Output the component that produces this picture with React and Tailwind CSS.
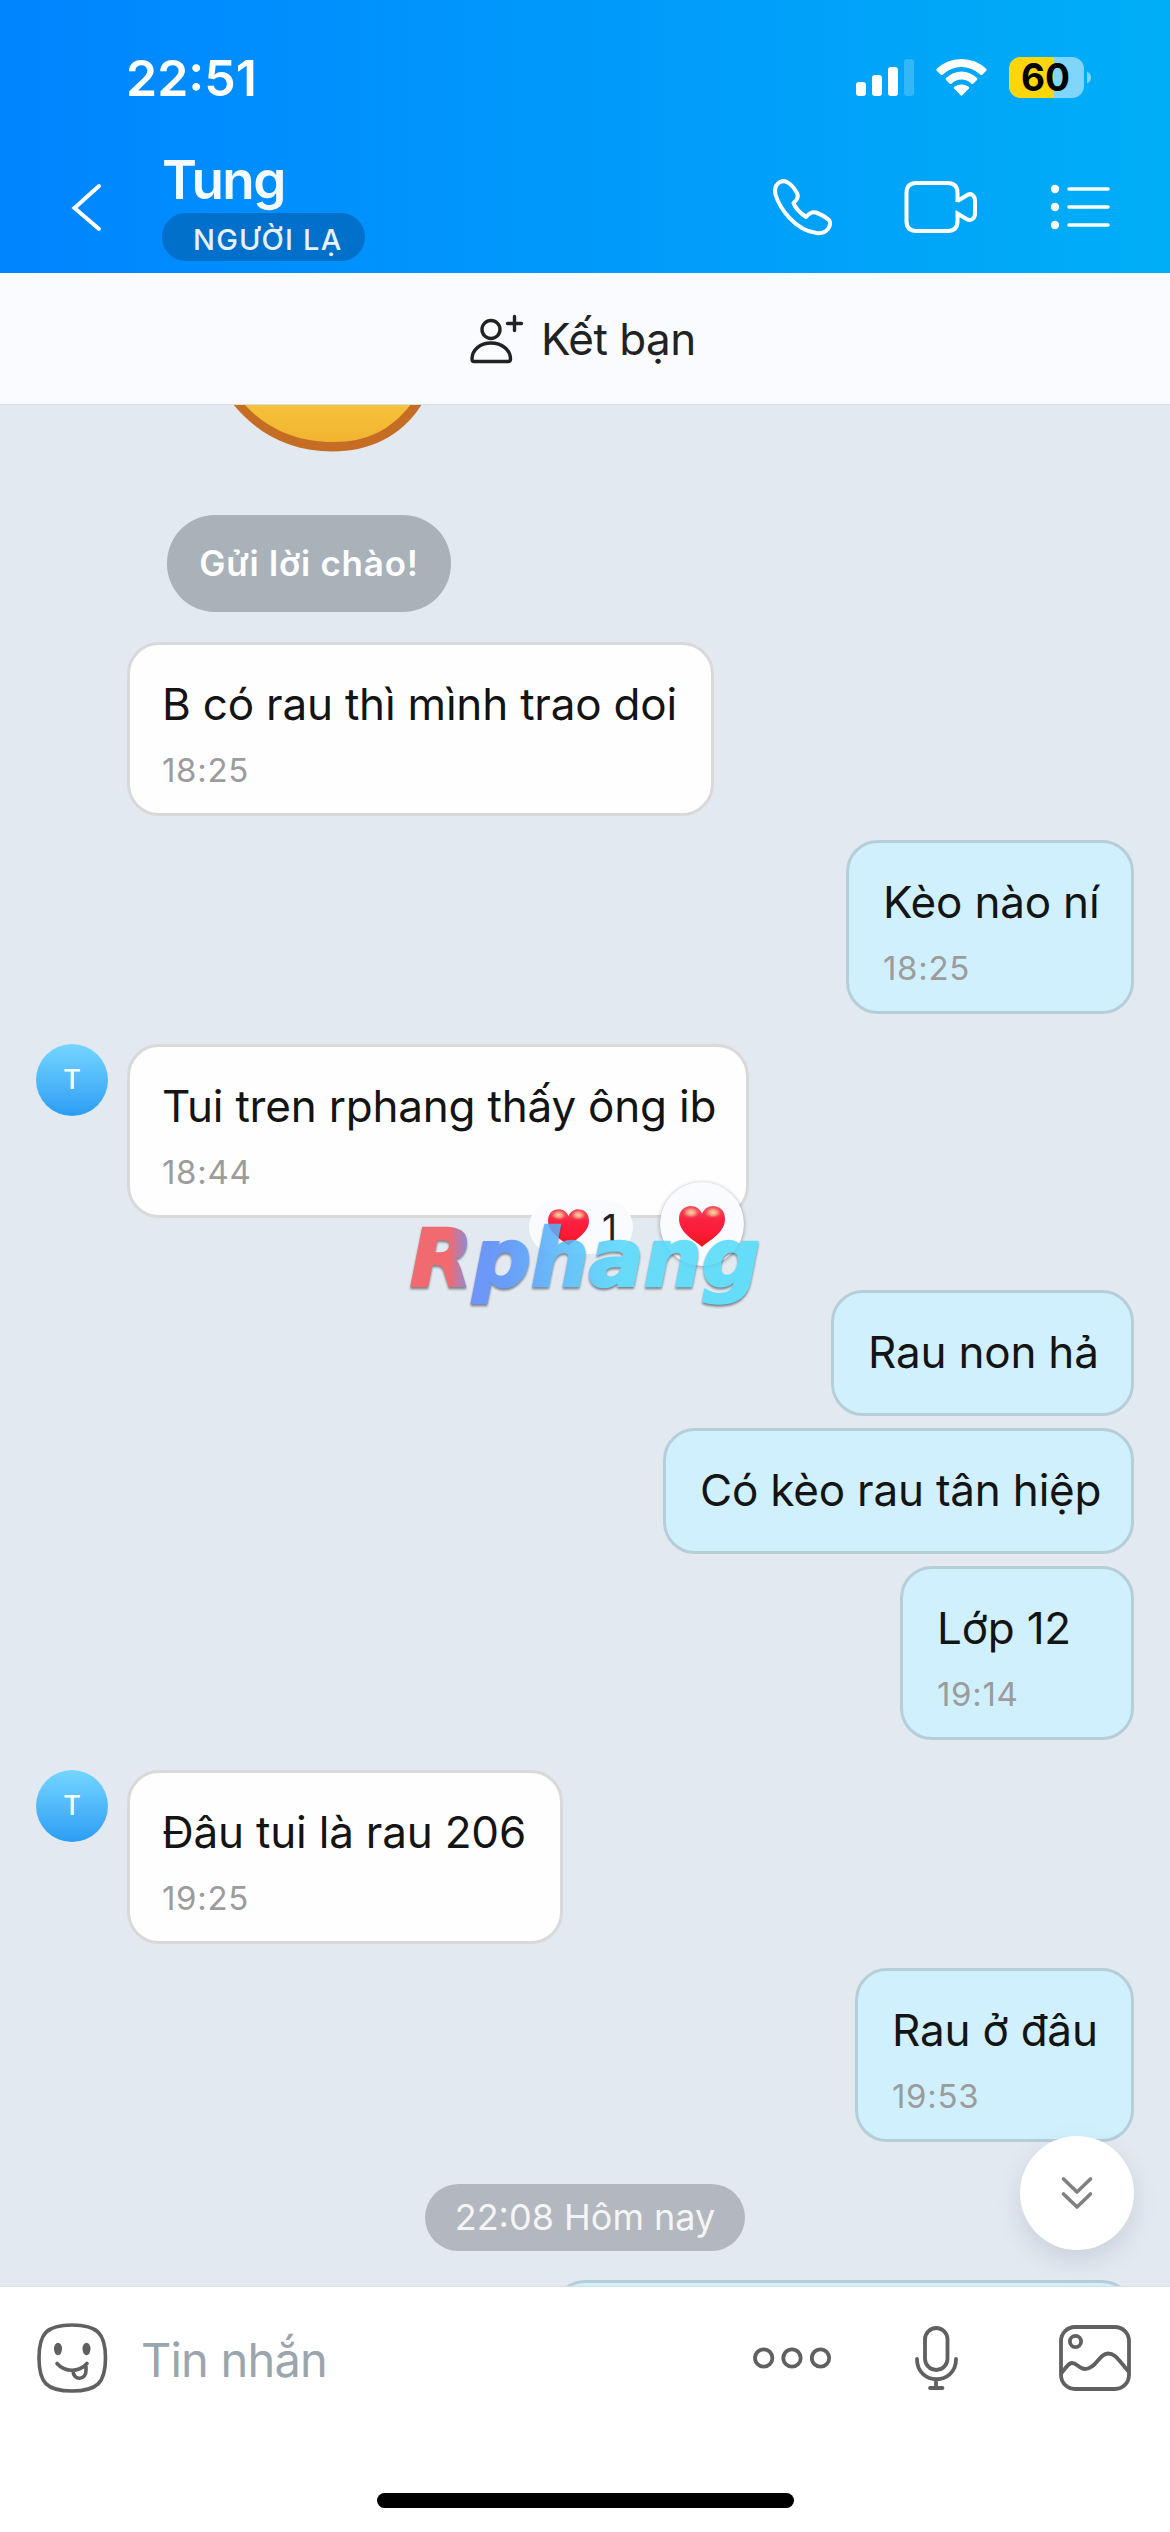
import clsx from "clsx";

const messages = [
  { id: 1, text: "B có rau thì mình trao doi", time: "18:25", box: "w-[587px] h-[174px] mt-[30px]" },
  { id: 2, mine: true, text: "Kèo nào ní", time: "18:25", box: "w-[288px] h-[174px] mt-6" },
  { id: 3, avatar: true, liked: true, text: "Tui tren rphang thấy ông ib", time: "18:44", box: "w-[622px] h-[174px] mt-[30px]" },
  { id: 4, mine: true, text: "Rau non hả", box: "w-[303px] h-[126px] mt-[72px]" },
  { id: 5, mine: true, text: "Có kèo rau tân hiệp", box: "w-[471px] h-[126px] mt-3" },
  { id: 6, mine: true, text: "Lớp 12", time: "19:14", box: "w-[234px] h-[174px] mt-3" },
  { id: 7, avatar: true, text: "Đâu tui là rau 206", time: "19:25", box: "w-[436px] h-[174px] mt-[30px]" },
  { id: 8, mine: true, text: "Rau ở đâu", time: "19:53", box: "w-[279px] h-[174px] mt-6" },
];

// ___________________________ICONS_________________________________________

function Heart({ className, id }) {
  return (
    <svg viewBox="0 0 46 41" className={className}>
      <defs>
        <linearGradient id={id} x1="0" y1="0" x2="0" y2="1">
          <stop offset="0" stopColor="#f2505a" />
          <stop offset="0.35" stopColor="#fb2140" />
          <stop offset="0.7" stopColor="#fb1a36" />
          <stop offset="1" stopColor="#e8140f" />
        </linearGradient>
        <radialGradient id={id + "s"}>
          <stop offset="0" stopColor="#ffd9a8" />
          <stop offset="0.5" stopColor="#ffb08c" stopOpacity="0.75" />
          <stop offset="1" stopColor="#ff5060" stopOpacity="0" />
        </radialGradient>
      </defs>
      <path
        d="M23 41C19 36 0 28 0 13C0 5 5 0 12 0C17 0 21 3 23 7.500C25 3 29 0 34 0C41 0 46 5 46 13C46 28 27 36 23 41Z"
        fill={`url(#${id})`}
      />
      <ellipse cx="12" cy="6.500" rx="9" ry="6" fill={`url(#${id}s)`} />
      <ellipse cx="34" cy="6.500" rx="9" ry="6" fill={`url(#${id}s)`} />
    </svg>
  );
}

function StatusIcons() {
  return (
    <svg className="w-[240px] h-[44px]" viewBox="852 56 240 44" fill="#fff">
      <rect x="856" y="82" width="10" height="14" rx="3" />
      <rect x="872" y="75" width="10" height="21" rx="3" />
      <rect x="888" y="67" width="10" height="29" rx="3" />
      <rect x="904" y="59" width="10" height="37" rx="3" opacity="0.2" />
      <path d="M961.500 96L954 88.500Q953.500 87.500 954.300 86.800Q961.500 82 968.700 86.800Q969.500 87.500 969 88.500Z" />
      <path d="M950 84L945.800 79.700Q945.200 78.800 946 78Q953 71.500 961.500 71.500Q970 71.500 977 78Q977.800 78.800 977.200 79.700L973 84Q972.300 84.300 971.500 83.700Q967 79.500 961.500 79.500Q956 79.500 951.500 83.700Q950.700 84.300 950 84Z" />
      <path d="M941 75L936.600 70.600Q936 69.800 936.600 69Q947 59 961.500 59Q976 59 986.400 69Q987 69.800 986.400 70.600L982 75Q981.200 75.300 980.500 74.700Q972 67 961.500 67Q951 67 942.500 74.700Q941.800 75.300 941 75Z" />
      <rect x="1009" y="57" width="75" height="41" rx="12" opacity="0.5" />
      <path d="M1021 57H1054V98H1021A12 12 0 0 1 1009 86V69A12 12 0 0 1 1021 57Z" fill="#ffd60a" />
      <path d="M1087 71.500Q1091 73.500 1091 77.500Q1091 81.500 1087 83.500Z" opacity="0.5" />
      <text x="1021" y="91" fill="#000" fontFamily="Inter, sans-serif" fontWeight="700" fontSize="38" textLength="49" lengthAdjust="spacingAndGlyphs">
        60
      </text>
    </svg>
  );
}

function PhoneIcon() {
  return (
    <svg className="w-[60px] h-[60px]" viewBox="772 177 60 60" fill="none" stroke="#fff" strokeWidth="4" strokeLinejoin="round">
      <path d="M787.500 182.500Q784 180 780 182Q773.500 186 775.500 194.500C779.500 208 795 230.500 816.500 233Q824 234 828 229Q832 223 828.500 219.500Q823 215 816 212.500Q811 211 806 217Q796 210 793.500 203Q799.500 198 797 193Q792 184.500 787.500 182.500Z" />
    </svg>
  );
}

function VideoIcon() {
  return (
    <svg className="w-[76px] h-[56px]" viewBox="903 179 76 56" fill="none" stroke="#fff" strokeWidth="4">
      <path d="M957.500 202V193Q957.500 183 947.500 183H916.500Q906.500 183 906.500 193V221Q906.500 231 916.500 231H947.500Q957.500 231 957.500 221V213.500L966.500 219Q970 221 972.500 219Q975 217 975 214V200.500Q975 197 972.500 195Q970 193 966.500 195.500L957.500 201" />
    </svg>
  );
}

function ListIcon() {
  return (
    <svg className="w-[64px] h-[50px]" viewBox="1049 182 64 50" fill="#fff" stroke="#fff" strokeLinecap="round">
      <circle cx="1055" cy="189" r="4.200" stroke="none" />
      <circle cx="1055" cy="207" r="4.200" stroke="none" />
      <circle cx="1055" cy="225" r="4.200" stroke="none" />
      <path d="M1069 189H1108M1069 207H1108M1069 225H1108" strokeWidth="3.600" />
    </svg>
  );
}

// ___________________________MESSAGES_________________________________________

function Avatar() {
  return (
    <div className="w-[72px] h-[72px] shrink-0 rounded-full bg-linear-to-b from-[#74d6ff] to-[#2a9df4] flex items-center justify-center text-white text-[27px] font-medium">
      T
    </div>
  );
}

function Bubble({ msg }) {
  return (
    <div className={clsx("flex", msg.mine ? "justify-end pr-9" : "pl-9")}>
      {!msg.mine && (
        <div className={clsx("w-[91px] shrink-0", msg.id === 1 ? "" : "pt-[30px]")}>
          {msg.avatar && <Avatar />}
        </div>
      )}
      <div
        className={clsx(
          "relative rounded-[32px] border-[3px] pt-[29px] whitespace-nowrap",
          msg.box,
          msg.mine ? "pl-[34px] bg-[#d0f0fe] border-[#b6ced8]" : "pl-8 bg-[#fefefe] border-[#d9d9d9]"
        )}
      >
        <p className="text-[44px] leading-[60px] tracking-[-0.2px] text-[#141414]">{msg.text}</p>
        {msg.time && <p className="mt-4 text-[33px] leading-10 tracking-[0.7px] text-[#9c9c9c]">{msg.time}</p>}
        {msg.liked && (
          <>
            <div className="absolute left-[399px] top-[153px] w-[104px] h-[54px] rounded-full bg-[#f9fbff] flex items-center pl-[19px] gap-[13px]">
              <Heart className="w-[41px] h-[37px]" id="h1" />
              <span className="text-[37px] leading-none text-[#222]">1</span>
            </div>
            <div className="absolute left-[530px] top-[135px] w-[84px] h-[84px] rounded-full bg-[#f9fbff] shadow-[0_1px_4px_rgba(0,0,0,0.35)] flex items-center justify-center">
              <Heart className="w-[46px] h-[41px] mt-1" id="h2" />
            </div>
            <Watermark />
          </>
        )}
      </div>
    </div>
  );
}

function Watermark() {
  return (
    <svg
      className="absolute left-[270px] top-[163px] w-[380px] h-[110px] opacity-85 drop-shadow-[0_2px_1px_rgba(50,60,70,0.7)]"
      viewBox="400 1210 380 110"
    >
      <defs>
        <linearGradient id="wm" gradientUnits="userSpaceOnUse" x1="411" y1="0" x2="760" y2="0">
          <stop offset="0" stopColor="#f4545a" />
          <stop offset="0.11" stopColor="#f4545a" />
          <stop offset="0.18" stopColor="#5a87fa" />
          <stop offset="0.27" stopColor="#5590fa" />
          <stop offset="0.45" stopColor="#53bdfb" />
          <stop offset="0.6" stopColor="#52d8fa" />
          <stop offset="1" stopColor="#50dcfa" />
        </linearGradient>
      </defs>
      <text
        x="410"
        y="1286"
        textLength="350"
        lengthAdjust="spacingAndGlyphs"
        fill="url(#wm)"
        stroke="url(#wm)"
        strokeWidth="2.500"
        fontFamily="DejaVu Sans, sans-serif"
        fontWeight="700"
        fontStyle="italic"
        fontSize="81"
      >
        Rphang
      </text>
    </svg>
  );
}

export default function App() {
  return (
    <div className="w-[1170px] h-[2532px] overflow-hidden flex flex-col bg-white font-['Inter','Noto_Sans',sans-serif]">
      {/* ___________________________HEADER_________________________________________ */}
      <header className="h-[273px] shrink-0 bg-linear-to-r from-[#0084ff] to-[#00aef6] text-white">
        <div className="h-[156px] pt-14 pl-[126px] pr-[78px] flex justify-between">
          <span className="text-[50px] leading-[44px] font-semibold">22:51</span>
          <StatusIcons />
        </div>
        <div className="h-[117px] flex">
          <svg className="ml-[70px] mt-6 w-[34px] h-[56px]" viewBox="70 180 34 56" fill="none" stroke="#fff" strokeWidth="4" strokeLinecap="round">
            <path d="M99 186L74.500 208L99 229" />
          </svg>
          <div className="ml-[58px] w-[300px]">
            <h1 className="h-[57px] text-[53px] leading-[48px] font-semibold text-[#f2f9ff] tracking-[-1.6px]">Tung</h1>
            <div className="w-[203px] h-12 rounded-full bg-[#0070cb] pl-[31px] text-[29px] leading-[53px] font-medium text-[#e6f1fa] tracking-[1.2px] whitespace-nowrap">
              NGƯỜI LẠ
            </div>
          </div>
          <div className="ml-auto mr-[57px] flex items-center h-[102px]">
            <PhoneIcon />
            <div className="ml-[71px]">
              <VideoIcon />
            </div>
            <div className="ml-[70px]">
              <ListIcon />
            </div>
          </div>
        </div>
      </header>

      <div className="h-[132px] shrink-0 bg-[#f9fbff] border-b border-[#dcdde0] flex items-center pl-[468px]">
        <svg className="w-[58px] h-[52px]" viewBox="468 311 58 52" fill="none" stroke="#222" strokeWidth="3.400" strokeLinecap="round" strokeLinejoin="round">
          <circle cx="491" cy="327.500" r="9" />
          <path d="M474 359.500Q472 359.500 472 357C472 348 480 341 491 341C502 341 510.500 348 510.500 357Q510.500 359.500 508 359.500Z" />
          <path d="M514.500 314.500V328.500M507.500 321.500H521.500" />
        </svg>
        <span className="ml-[15px] text-[44px] leading-[60px] tracking-[-0.5px] text-[#222]">Kết bạn</span>
      </div>

      {/* ___________________________CHAT AREA_________________________________________ */}
      <main className="relative h-[1881px] shrink-0 overflow-hidden bg-[#e2e9f1]">
        <svg className="block ml-[220px] w-[220px] h-[48px]" viewBox="220 405 220 48">
          <defs>
            <linearGradient id="face" x1="0" y1="0" x2="0" y2="1">
              <stop offset="0" stopColor="#f5c23a" />
              <stop offset="1" stopColor="#f2b430" />
            </linearGradient>
          </defs>
          <path d="M233 404C258 435 292 451.500 332 451.500C370 451.500 402 436 422 404Z" fill="#c66d25" />
          <path d="M244 404C268 430 298 442 333 442C368 442 392 429 411 404Z" fill="url(#face)" />
        </svg>
        <div className="mt-[62px] ml-[167px] w-[284px] h-[97px] rounded-[48px] bg-[#a9b1b9] flex items-center justify-center text-[35px] font-semibold tracking-[0.75px] text-white whitespace-nowrap">
          Gửi lời chào!
        </div>

        {messages.map((msg) => (
          <Bubble key={msg.id} msg={msg} />
        ))}

        <div className="mt-[42px] mx-auto w-[320px] h-[67px] rounded-full bg-[#b3b8c0] flex items-center justify-center pb-0.5 text-[36px] text-[#f5f5f5] whitespace-nowrap">
          22:08 Hôm nay
        </div>
        <div className="mt-[29px] ml-[553px] w-[581px] h-[126px] rounded-[32px] border-[3px] bg-[#d0f0fe] border-[#b6ced8]"></div>

        <button className="absolute right-9 bottom-9 w-[114px] h-[114px] rounded-full bg-white shadow-[0_10px_24px_rgba(80,90,110,0.16)] flex items-center justify-center">
          <svg className="w-[36px] h-[38px]" viewBox="1059 2173 36 38" fill="none" stroke="#808080" strokeWidth="3.600" strokeLinecap="round" strokeLinejoin="round">
            <path d="M1063.500 2178L1077 2191L1090.500 2178M1063.500 2193L1077 2206L1090.500 2193" />
          </svg>
        </button>
      </main>

      {/* ___________________________INPUT BAR_________________________________________ */}
      <footer className="flex-1 bg-white border-t border-[#dcdde0] flex flex-col">
        <div className="h-[142px] flex items-center pl-[35px] pr-[37px]">
          <svg className="w-[74px] h-[74px]" viewBox="35 2321 74 74" fill="none" stroke="#606060" strokeWidth="3.600" strokeLinecap="round">
            <path d="M72 2325C97 2325 105.500 2333 105.500 2358C105.500 2383 97 2391 72 2391C47 2391 39 2383 39 2358C39 2333 47 2325 72 2325Z" />
            <ellipse cx="58" cy="2349" rx="4" ry="6.200" fill="#606060" stroke="none" />
            <ellipse cx="86.500" cy="2349" rx="4" ry="6.200" fill="#606060" stroke="none" />
            <path d="M57 2363.500C65 2372.500 79 2372.500 87 2363.500M73 2370.500C73 2381 86.500 2381 86 2370V2366" />
          </svg>
          <span className="ml-[32px] pt-1 text-[47px] leading-[60px] tracking-[-0.8px] text-[#9aa5ae] whitespace-nowrap">Tin nhắn</span>
          <div className="ml-auto flex items-center">
            <svg className="w-[82px] h-[26px]" viewBox="751 2345 82 26" fill="none" stroke="#606060" strokeWidth="3.800">
              <circle cx="763.700" cy="2358" r="8.700" />
              <circle cx="792" cy="2358" r="8.700" />
              <circle cx="820.500" cy="2358" r="8.700" />
            </svg>
            <svg className="ml-[80px] w-[48px] h-[68px]" viewBox="913 2325 48 68" fill="none" stroke="#606060" strokeWidth="3.800" strokeLinecap="round">
              <rect x="925" y="2329" width="22.500" height="42" rx="11.250" />
              <path d="M917 2360C917 2387 956 2387 956 2360M936 2380.500V2389M930 2389H942.500" />
            </svg>
            <svg className="ml-[96px] w-[76px] h-[70px]" viewBox="1057 2323 76 70" fill="none" stroke="#606060" strokeWidth="3.800">
              <rect x="1061" y="2327" width="68" height="62" rx="14" />
              <circle cx="1075.500" cy="2341.500" r="5.600" />
              <path d="M1061.500 2373C1067 2366 1069 2363 1072 2363C1077 2363 1079 2369 1085 2369C1096 2369 1099 2353.500 1108 2353.500C1116 2353.500 1119 2361 1129 2372" />
            </svg>
          </div>
        </div>
        <div className="mt-[64px] mx-auto w-[417px] h-[15px] rounded-full bg-black"></div>
      </footer>
    </div>
  );
}
